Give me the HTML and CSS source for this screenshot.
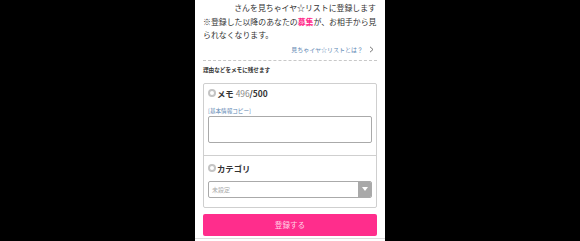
FILE: index.html
```html
<!DOCTYPE html>
<html lang="ja">
<head>
<meta charset="utf-8">
<link rel="stylesheet" href="styles.css">
</head>
<body>
<div class="page">
  <div class="intro">
    <p class="line-right">さんを見ちゃイヤ☆リストに登録します</p>
    <p>※登録した以降のあなたの<span class="pink">募集</span>が、お相手から見<br>られなくなります。</p>
  </div>
  <div class="about">
    <a class="about-link">見ちゃイヤ☆リストとは？</a>
    <svg class="chev" width="5" height="7" viewBox="0 0 5 7"><path d="M1 0.8 L4 3.5 L1 6.2" fill="none" stroke="#666" stroke-width="0.9"/></svg>
  </div>
  <p class="hint">理由などをメモに残せます</p>
  <div class="box">
    <div class="section memo">
      <div class="label"><span class="mark"></span><span>メモ <span class="count">496</span>/500</span></div>
      <a class="copy">[基本情報コピー]</a>
      <div class="textarea"></div>
    </div>
    <div class="section cat">
      <div class="label"><span class="mark"></span><span>カテゴリ</span></div>
      <div class="select">
        <span class="placeholder">未設定</span>
        <span class="arrow"><svg width="6" height="4" viewBox="0 0 6 4"><path d="M0 0 H6 L3 4 Z" fill="#fff"/></svg></span>
      </div>
    </div>
  </div>
  <div class="button">登録する</div>
  <div class="bottom-line"></div>
</div>
</body>
</html>
```
FILE: styles.css
```css
* { box-sizing: border-box; }
html, body { margin: 0; padding: 0; background: #000; }
body {
  font-family: "Noto Sans CJK JP", "Noto Sans", sans-serif;
  color: #333;
}
.page {
  width: 190px;
  height: 241px;
  margin: 0 auto;
  background: #fff;
  padding: 1px 8px 0;
  display: flex;
  flex-direction: column;
}
.intro p {
  margin: 0;
  font-size: 7.9px;
  line-height: 13.5px;
  white-space: nowrap;
}
.intro .line-right { text-align: right; padding-right: 1px; }
.pink { color: #ff2d8c; font-weight: bold; }
.about {
  margin-top: 3px;
  height: 10px;
  padding-bottom: 5px;
  box-sizing: content-box;
  border-bottom: 1px dashed #c8c8c8;
  display: flex;
  justify-content: flex-end;
  align-items: center;
}
.about-link {
  font-size: 6px;
  color: #5d86b3;
  line-height: 10px;
}
.chev { margin-left: 6px; margin-right: 3px; }
.hint {
  margin: 4px 0 0;
  font-size: 5.6px;
  line-height: 10px;
  font-weight: bold;
  color: #333;
}
.box {
  margin-top: 8px;
  border: 1px solid #cfcfcf;
  border-radius: 2px;
}
.section { padding: 0 4px; }
.memo { padding-top: 3px; padding-bottom: 12px; border-bottom: 1px solid #cfcfcf; }
.cat { padding-top: 6px; padding-bottom: 9px; }
.label {
  font-size: 8.4px;
  height: 12px;
  font-weight: bold;
  color: #333;
  display: flex;
  align-items: center;
  gap: 1px;
}
.label > span:last-child { line-height: 12px; white-space: pre; }
.mark {
  width: 8px;
  height: 8px;
  border: 2px solid #c4c4c4;
  border-radius: 50%;
  flex: none;
}
.count { color: #888; font-weight: normal; }
.copy {
  display: block;
  margin-top: 8px;
  font-size: 5.6px;
  line-height: 8px;
  color: #5d86b3;
}
.textarea {
  margin-top: 1px;
  height: 27px;
  border: 1px solid #aaa;
  border-radius: 2px;
}
.select {
  margin-top: 7px;
  height: 17px;
  border: 1px solid #aaa;
  border-radius: 2px;
  display: flex;
  align-items: center;
  justify-content: space-between;
  overflow: hidden;
}
.placeholder {
  font-size: 6px;
  color: #aaa;
  padding-left: 3px;
}
.arrow {
  width: 13px;
  height: 100%;
  background: #a9a9a9;
  display: flex;
  align-items: center;
  justify-content: center;
}
.button {
  margin-top: 6px;
  height: 22px;
  background: #ff2d8c;
  border-radius: 2px;
  color: #ffd3e6;
  font-size: 7.6px;
  display: flex;
  align-items: center;
  justify-content: center;
}
.bottom-line {
  margin: 2px -8px 0;
  height: 1px;
  background: #dcdcdc;
}
```
